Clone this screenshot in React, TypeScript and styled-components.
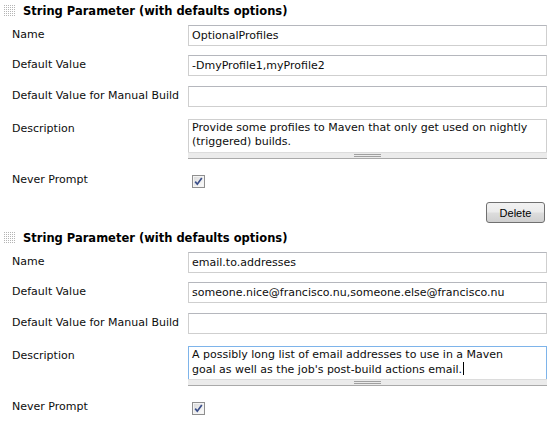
import React from "react";
import styled, { createGlobalStyle } from "styled-components";

const GlobalStyle = createGlobalStyle`
  body {
    margin: 0;
    background: #ffffff;
    font-family: "DejaVu Sans", Verdana, sans-serif;
    font-size: 11px;
    color: #0d0d0d;
  }
`;

type Param = {
  name: string;
  defaultValue: string;
  manualValue: string;
  // description as it wraps inside the text box
  description: string[];
  focused?: boolean;
};

const params: Param[] = [
  {
    name: "OptionalProfiles",
    defaultValue: "-DmyProfile1,myProfile2",
    manualValue: "",
    description: [
      "Provide some profiles to Maven that only get used on nightly",
      "(triggered) builds.",
    ],
  },
  {
    name: "email.to.addresses",
    defaultValue: "someone.nice@francisco.nu,someone.else@francisco.nu",
    manualValue: "",
    description: [
      "A possibly long list of email addresses to use in a Maven",
      "goal as well as the job's post-build actions email.",
    ],
    focused: true,
  },
];

const Page = styled.div`
  width: 549px;
  display: flex;
  flex-direction: column;
`;

const Section = styled.section<{ $top: number }>`
  display: flex;
  flex-direction: column;
  margin-top: ${(p) => p.$top}px;
`;

const Header = styled.div`
  display: flex;
  align-items: center;
  gap: 7px;
  height: 22px;
  padding-left: 4px;
  font-weight: bold;
  font-size: 11.5px;
  color: #000;
`;

const Field = styled.div<{ $top: number }>`
  display: grid;
  grid-template-columns: 188px 1fr;
  align-items: start;
  margin-top: ${(p) => p.$top}px;
  padding-right: 2px;
`;

const Label = styled.div`
  padding: 3px 0 0 12px;
  line-height: 14px;
  white-space: nowrap;
`;

const TextInput = styled.input`
  box-sizing: border-box;
  width: 100%;
  height: 21px;
  margin: 0;
  padding: 0 3px;
  border: 1px solid #cfcfcf;
  border-top-color: #b5b7bd;
  font: 11px "DejaVu Sans", Verdana, sans-serif;
  color: #0d0d0d;
  outline: none;
`;

const AreaBox = styled.div<{ $focused?: boolean }>`
  display: flex;
  flex-direction: column;
  border: 1px solid ${(p) => (p.$focused ? "#7eb4ea" : "#cfcfcf")};
  border-bottom: none;
`;

const AreaText = styled.div`
  height: 31px;
  padding: 1px 3px 0;
  line-height: 14px;
  overflow: hidden;
  white-space: nowrap;
`;

const Caret = styled.span`
  display: inline-block;
  width: 1px;
  height: 13px;
  margin-left: 1px;
  vertical-align: -2px;
  background: #000;
`;

const Grippie = styled.div`
  display: flex;
  justify-content: center;
  align-items: center;
  height: 7px;
  margin: 0 -1px;
  background: #ebebeb;
  border-top: 1px solid #dcdcdc;
  border-bottom: 1px solid #a9a9a9;
  box-sizing: border-box;
`;

const GrippieLines = styled.div`
  width: 27px;
  height: 3px;
  border-top: 1px solid #a0a0a0;
  border-bottom: 1px solid #a0a0a0;
  box-sizing: border-box;
`;

const CheckWrap = styled.div`
  margin: 5px 0 0 4px;
  width: 13px;
  height: 13px;
  display: flex;
`;

const ButtonRow = styled.div`
  display: flex;
  justify-content: flex-end;
  margin-top: 14px;
  padding-right: 4px;
`;

const Button = styled.button`
  width: 59px;
  height: 21px;
  padding: 0;
  border: 1px solid #707070;
  border-radius: 3px;
  background: linear-gradient(#f2f2f2 0%, #ebebeb 48%, #dddddd 52%, #cfcfcf 100%);
  font: 11px "Liberation Sans", Tahoma, sans-serif;
  color: #000;
  cursor: pointer;
`;

const Grip = () => (
  <svg width="12" height="12" viewBox="0 0 12 12">
    {Array.from({ length: 36 }, (_, i) => (
      <rect
        key={i}
        x={(i % 6) * 2}
        y={Math.floor(i / 6) * 2}
        width="1"
        height="1"
        fill="#b4b4b4"
      />
    ))}
  </svg>
);

const CheckBox = () => (
  <CheckWrap>
    <svg width="13" height="13" viewBox="0 0 13 13">
      <defs>
        <linearGradient id="cbg" x1="0" y1="0" x2="1" y2="1">
          <stop offset="0" stopColor="#dcdcdc" />
          <stop offset="1" stopColor="#fbfbfb" />
        </linearGradient>
      </defs>
      <rect x="0.5" y="0.5" width="12" height="12" fill="#f4f4f4" stroke="#8f8f8f" />
      <rect x="2" y="2" width="9" height="9" fill="url(#cbg)" />
      <path
        d="M3.2 6.6 L5.3 9.2 L9.8 3"
        fill="none"
        stroke="#3b4f8a"
        strokeWidth="1.7"
      />
    </svg>
  </CheckWrap>
);

const ParamBlock = ({ p, top, last }: { p: Param; top: number; last?: boolean }) => (
  <Section $top={top}>
    <Header>
      <Grip />
      String Parameter (with defaults options)
    </Header>
    <Field $top={3}>
      <Label>Name</Label>
      <TextInput defaultValue={p.name} />
    </Field>
    <Field $top={9}>
      <Label>Default Value</Label>
      <TextInput defaultValue={p.defaultValue} />
    </Field>
    <Field $top={10}>
      <Label>Default Value for Manual Build</Label>
      <TextInput defaultValue={p.manualValue} />
    </Field>
    <Field $top={12}>
      <Label>Description</Label>
      <AreaBox $focused={p.focused}>
        <AreaText>
          {p.description.map((line, i) => (
            <div key={i}>
              {line}
              {p.focused && i === p.description.length - 1 && <Caret />}
            </div>
          ))}
        </AreaText>
        <Grippie>
          <GrippieLines />
        </Grippie>
      </AreaBox>
    </Field>
    <Field $top={11}>
      <Label>Never Prompt</Label>
      <CheckBox />
    </Field>
    {!last && (
      <ButtonRow>
        <Button>Delete</Button>
      </ButtonRow>
    )}
  </Section>
);

export default function App() {
  return (
    <Page>
      <GlobalStyle />
      {params.map((p, i) => (
        <ParamBlock key={p.name} p={p} top={i === 0 ? 0 : 4} last={i === params.length - 1} />
      ))}
    </Page>
  );
}
